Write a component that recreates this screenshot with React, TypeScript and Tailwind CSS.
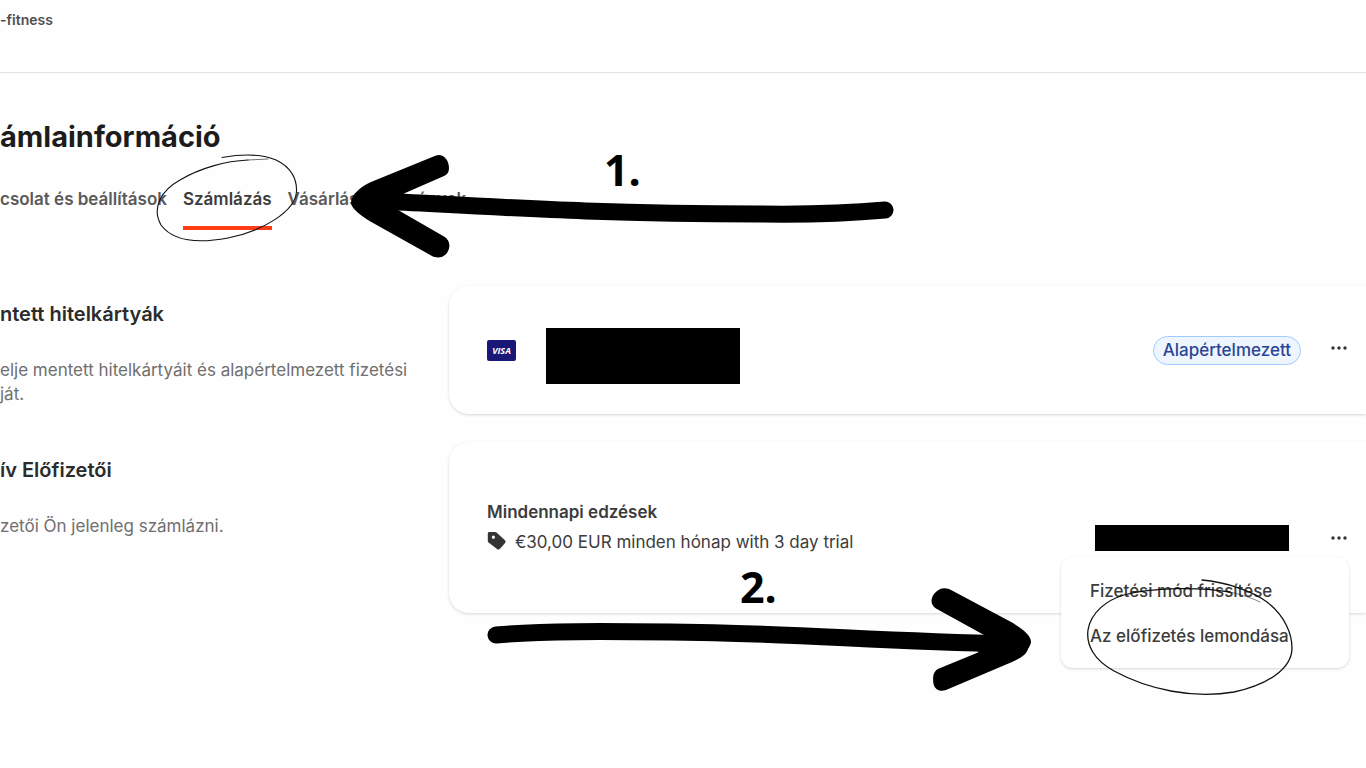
import { clsx } from "clsx";

const TABS = [
  { label: "csolat és beállítások", active: false },
  { label: "Számlázás", active: true },
  { label: "Vásárlási előzmények", active: false },
];

const MENU_ITEMS = ["Fizetési mód frissítése", "Az előfizetés lemondása"];

function DotsButton() {
  return (
    <button type="button" aria-label="Menu" className="flex h-6 w-6 items-center justify-center text-[#343434]">
      <svg viewBox="0 0 16 4" className="h-1 w-4" fill="currentColor">
        <circle cx="2" cy="2" r="1.7" />
        <circle cx="8" cy="2" r="1.7" />
        <circle cx="14" cy="2" r="1.7" />
      </svg>
    </button>
  );
}

function TagIcon() {
  return (
    <svg viewBox="0 0 20 20" className="mt-0.5 h-5 w-5 text-[#343434]">
      <path
        fill="currentColor"
        fillRule="evenodd"
        d="M2.500 2h5.500c.7 0 1.300.3 1.800.7l7.900 7.200a2.400 2.400 0 0 1 .2 3.300l-4.700 5.300a2.400 2.400 0 0 1-3.500.2L1.600 12.600A2.200 2.200 0 0 1 .8 11V3.700C.8 2.700 1.500 2 2.500 2Zm3.900 3.600a1.600 1.600 0 1 0 0 3.200 1.600 1.600 0 0 0 0-3.200Z"
      />
    </svg>
  );
}

function VisaBadge() {
  return (
    <span className="flex h-[21px] w-[29px] items-center justify-center rounded-xs bg-[#1a1876] font-['Open_Sans',sans-serif] text-[9px] leading-none font-bold text-white italic">
      VISA
    </span>
  );
}

interface SectionInfoProps {
  title: string;
  lines: string[];
}

function SectionInfo({ title, lines }: SectionInfoProps) {
  return (
    <div className="w-[449px] shrink-0 pt-3.5">
      <h2 className="text-xl leading-7 font-semibold text-[#2b2b2b]">{title}</h2>
      <p className="mt-[30px] text-[17px] leading-6 text-[#6f6f6f]">
        {lines.map((line) => (
          <span key={line} className="block">
            {line}
          </span>
        ))}
      </p>
    </div>
  );
}

// Hand-drawn arrows, loops and step numbers laid over the page
function Annotations() {
  return (
    <svg
      viewBox="0 0 1366 768"
      className="pointer-events-none absolute top-0 left-0 h-[768px] w-[1366px] max-w-none"
      fill="none"
      stroke="#000"
      strokeLinecap="round"
      strokeLinejoin="round"
    >
      <path strokeWidth="17" d="M380 201C500 207 600 214 760 214Q830 215 885 210" />
      <path
        fill="#000"
        stroke="none"
        d="M351 203C351 196 358 188 371 182L436 155.500C443 153 449 160 449 168Q449 174 444 176L404 193.500L398 210L444 236.500C450 240 451 247 447 253C443 258 437 258.500 432 256L374 223.500C362 217 351 208 351 203Z"
      />
      <path strokeWidth="17" d="M496 635C540 631 600 631 700 632.500C800 634 880 641 1010 644" />
      <path
        fill="#000"
        stroke="none"
        d="M1031 642C1031 635 1022 629 1013 623L952 590.500C945 586.500 939 588 934 594C930 600 931 605 936 608.500L984 635L978 652.500L939 668.500C933 671 932.500 677 933.500 684C935 690 940 692 946 690L1012 662C1022 657 1026 655 1028 649Q1031 644 1031 642Z"
      />
      <g stroke="#111">
        <path
          strokeWidth="1.100"
          d="M222 157.500C242 154 262 154 276 160C291 167 297 179 296.500 191C296 211 263 231 228 238C196 244 172 240 161 225C151 207 162 190 180 180C200 168 226 161 248 160"
        />
        <path strokeWidth="0.600" d="M248 160L268 159" />
        <path
          strokeWidth="1.300"
          d="M1202 580C1226 582 1252 591 1267 602C1285 616 1292 634 1292 648C1292 669 1267 685 1234 692C1194 699 1149 690 1114 671C1094 660 1086 645 1088 630C1091 612 1107 600 1124 595C1152 587 1200 587 1230 592"
        />
        <path strokeWidth="0.500" d="M1230 592Q1248 596 1260 602" />
      </g>
      <g fill="#000" stroke="none" className="font-['Open_Sans',sans-serif] text-[43px] font-bold">
        <text x="604" y="186">1.</text>
        <text x="740" y="603">2.</text>
      </g>
    </svg>
  );
}

export default function App() {
  return (
    <div className="relative min-h-screen w-full overflow-hidden bg-[#fefefe] font-[Inter,sans-serif] text-[#3c3c3c]">
      <header className="h-[73px] border-b border-[#e2e2e2] pt-2">
        <p className="text-sm leading-6 font-semibold text-[#4f4f4f]">-fitness</p>
      </header>

      <main className="pt-11">
        <h1 className="text-[29px] leading-10 font-bold text-[#1c1c1c]">ámlainformáció</h1>

        <nav className="mt-7 flex gap-4">
          {TABS.map((tab) => (
            <a
              key={tab.label}
              href="#"
              className={clsx(
                "border-b-4 pb-[13px] text-[17px] leading-7 font-semibold",
                tab.active ? "border-[#ff3d14] text-[#3c3c3c]" : "border-transparent text-[#5a5a5a]"
              )}
            >
              {tab.label}
            </a>
          ))}
        </nav>

        <div className="mt-14 space-y-7">
          <section className="flex">
            <SectionInfo
              title="ntett hitelkártyák"
              lines={["elje mentett hitelkártyáit és alapértelmezett fizetési", "ját."]}
            />
            <div className="flex h-32 grow items-center rounded-l-[20px] bg-white pr-[15px] pl-[38px] shadow-[0_1px_3px_rgba(0,0,0,0.16)]">
              <VisaBadge />
              <div className="mt-3 ml-[30px] h-14 w-[194px] bg-black" />
              <span className="ml-auto rounded-full border border-[#9fccff] bg-[#eef5ff] px-[9px] text-[17px] leading-[27px] font-medium text-[#2a4595]">
                Alapértelmezett
              </span>
              <div className="ml-[26px] pb-1">
                <DotsButton />
              </div>
            </div>
          </section>

          <section className="flex">
            <SectionInfo title="ív Előfizetői" lines={["zetői Ön jelenleg számlázni."]} />
            <div className="flex h-[171px] grow items-start justify-between rounded-l-[20px] bg-white pr-[15px] pl-[38px] shadow-[0_1px_3px_rgba(0,0,0,0.16)]">
              <div className="pt-14">
                <h3 className="text-[17px] leading-7 font-semibold">Mindennapi edzések</h3>
                <p className="mt-0.5 flex gap-2 text-[17px] leading-7">
                  <TagIcon />
                  €30,00 EUR minden hónap with 3 day trial
                </p>
              </div>
              <div className="relative mt-[83px] flex items-center gap-[38px]">
                <div className="h-[26px] w-[194px] bg-black" />
                <DotsButton />
                <ul className="absolute top-full right-0.5 mt-1.5 w-72 rounded-xl bg-white px-[29px] pt-5 pb-[18px] shadow-[0_1px_3px_rgba(0,0,0,0.16)]">
                  {MENU_ITEMS.map((item) => (
                    <li key={item} className="mb-[17px] last:mb-0">
                      <button type="button" className="block text-[17px] leading-7 font-medium whitespace-nowrap">
                        {item}
                      </button>
                    </li>
                  ))}
                </ul>
              </div>
            </div>
          </section>
        </div>
      </main>

      <Annotations />
    </div>
  );
}
